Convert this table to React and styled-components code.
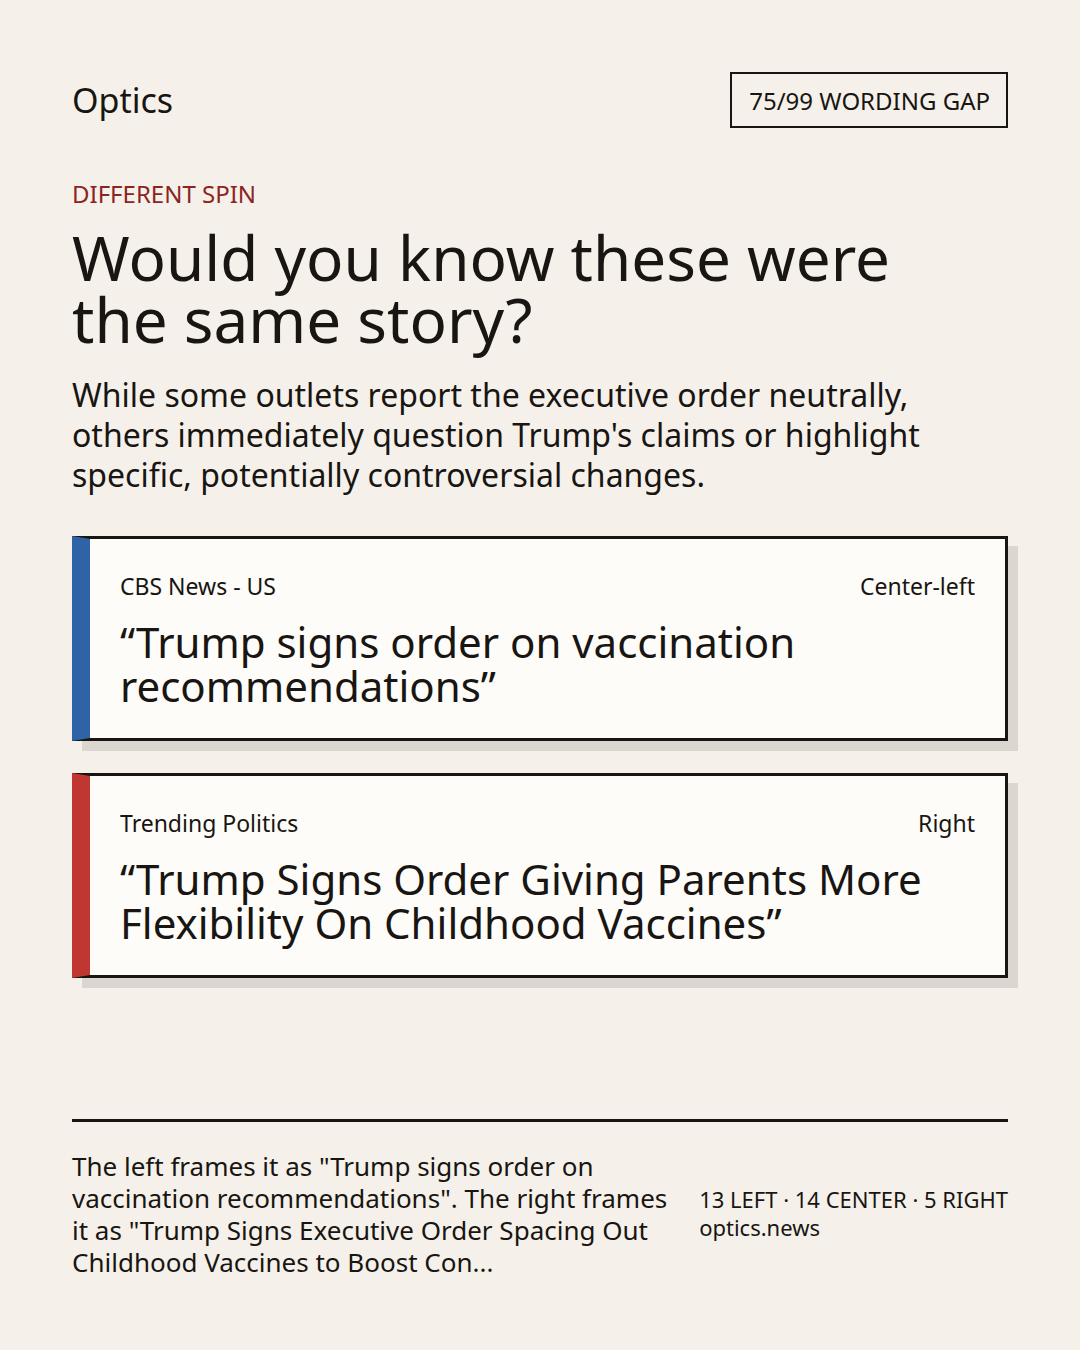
import React from "react";
import styled, { createGlobalStyle } from "styled-components";

const GlobalStyle = createGlobalStyle`
  html, body { margin: 0; padding: 0; background: #f5f1ea; }
  body { font-family: "Noto Sans", "Open Sans", sans-serif; color: #181512; }
  * { box-sizing: border-box; }
`;

const Page = styled.div`
  width: 1080px;
  height: 1350px;
  padding: 72px;
  display: flex;
  flex-direction: column;
  background: #f5f1ea;
`;

const Header = styled.header`
  display: flex;
  justify-content: space-between;
  align-items: center;
`;

const Brand = styled.div`
  font-size: 34px;
  line-height: 40px;
`;

const Badge = styled.div`
  border: 2px solid #181512;
  padding: 0 16px 0 17px;
  height: 56px;
  display: flex;
  align-items: center;
  font-size: 24px;
`;

const Eyebrow = styled.div`
  margin-top: 51px;
  font-size: 24px;
  line-height: 30px;
  color: #8a2522;
`;

const Headline = styled.h1`
  margin: 17px 0 0;
  max-width: 880px;
  font-weight: 400;
  font-size: 62px;
  line-height: 62px;
`;

const Lede = styled.p`
  margin: 25px 0 0;
  font-size: 32px;
  line-height: 40px;
`;

const Cards = styled.div`
  margin-top: 41px;
  display: flex;
  flex-direction: column;
  gap: 32px;
`;

const Card = styled.article`
  background: #fdfcf8;
  border: 3px solid #181512;
  border-left: 18px solid ${(p) => p.$accent};
  box-shadow: 10px 10px 0 #dbd7d0;
  padding: 33px 30px 30px;
`;

const CardMeta = styled.div`
  display: flex;
  justify-content: space-between;
  font-size: 23px;
  line-height: 28px;
`;

const CardTitle = styled.div`
  margin-top: 20px;
  font-size: 42px;
  line-height: 44px;
`;

const Footer = styled.footer`
  margin-top: auto;
  border-top: 3px solid #181512;
  padding-top: 28px;
  display: flex;
  align-items: center;
  gap: 24px;
`;

const Summary = styled.p`
  flex: 1;
  margin: 0;
  font-size: 26px;
  line-height: 32px;
`;

const Stats = styled.div`
  font-size: 22px;
  line-height: 28px;
  white-space: nowrap;
  margin-top: -2px;
`;

const cards = [
  {
    source: "CBS News - US",
    lean: "Center-left",
    accent: "#2e63a6",
    title: "“Trump signs order on vaccination recommendations”",
  },
  {
    source: "Trending Politics",
    lean: "Right",
    accent: "#c03631",
    title:
      "“Trump Signs Order Giving Parents More Flexibility On Childhood Vaccines”",
  },
];

export default function App() {
  return (
    <>
      <GlobalStyle />
      <Page>
        <Header>
          <Brand>Optics</Brand>
          <Badge>75/99 WORDING GAP</Badge>
        </Header>
        <Eyebrow>DIFFERENT SPIN</Eyebrow>
        <Headline>Would you know these were the same story?</Headline>
        <Lede>
          While some outlets report the executive order neutrally, others
          immediately question Trump's claims or highlight specific,
          potentially controversial changes.
        </Lede>
        <Cards>
          {cards.map((c) => (
            <Card key={c.source} $accent={c.accent}>
              <CardMeta>
                <span>{c.source}</span>
                <span>{c.lean}</span>
              </CardMeta>
              <CardTitle>{c.title}</CardTitle>
            </Card>
          ))}
        </Cards>
        <Footer>
          <Summary>
            The left frames it as "Trump signs order on vaccination
            recommendations". The right frames it as "Trump Signs Executive
            Order Spacing Out Childhood Vaccines to Boost Con...
          </Summary>
          <Stats>
            <div>13 LEFT · 14 CENTER · 5 RIGHT</div>
            <div>optics.news</div>
          </Stats>
        </Footer>
      </Page>
    </>
  );
}
